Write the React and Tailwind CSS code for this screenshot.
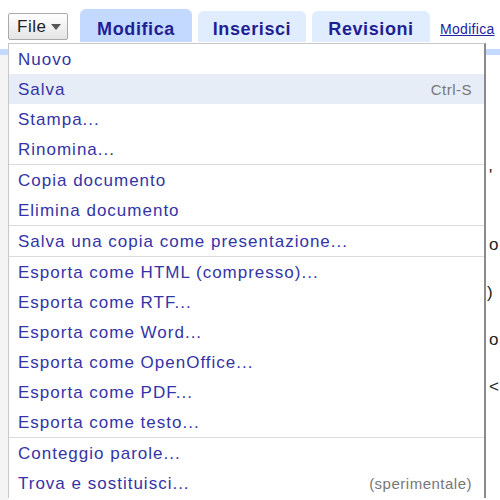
import React from "react";

const groups = [
  [
    { t: "Nuovo" },
    { t: "Salva", k: "Ctrl-S", hi: true },
    { t: "Stampa..." },
    { t: "Rinomina..." },
  ],
  [{ t: "Copia documento" }, { t: "Elimina documento" }],
  [{ t: "Salva una copia come presentazione..." }],
  [
    { t: "Esporta come HTML (compresso)..." },
    { t: "Esporta come RTF..." },
    { t: "Esporta come Word..." },
    { t: "Esporta come OpenOffice..." },
    { t: "Esporta come PDF..." },
    { t: "Esporta come testo..." },
  ],
  [{ t: "Conteggio parole..." }, { t: "Trova e sostituisci...", k: "(sperimentale)" }],
];

export default function App() {
  return (
    <div
      className="relative w-[500px] h-[500px] overflow-hidden bg-white"
      style={{ fontFamily: '"Liberation Sans", Arial, sans-serif' }}
    >
      {/* top bar */}
      <div className="flex items-end h-[42px] pl-[8px]">
        <div className="mb-[2px] flex items-center gap-[5px] h-[27px] w-[60px] pl-[8px] rounded-[2px] border border-[#a9a9a9] bg-gradient-to-b from-white to-[#e4e4e4] text-[17px] tracking-[0.5px] text-[#222]">
          <span>File</span>
          <svg width="10" height="6" viewBox="0 0 10 6">
            <path d="M0 0 L10 0 L5 6 Z" fill="#555" />
          </svg>
        </div>
        <div className="ml-[12px] flex items-end justify-center pb-[4px] leading-none w-[112px] h-[33px] rounded-t-[6px] bg-[#c3d9ff] text-[18px] tracking-[0.6px] font-bold text-[#1f1f95]">
          Modifica
        </div>
        <div className="ml-[6px] flex items-end justify-center pb-[4px] leading-none w-[108px] h-[31px] rounded-t-[6px] bg-[#e0ecff] text-[18px] tracking-[0.6px] font-bold text-[#1f1f95]">
          Inserisci
        </div>
        <div className="ml-[6px] flex items-end justify-center pb-[4px] leading-none w-[118px] h-[31px] rounded-t-[6px] bg-[#e0ecff] text-[18px] tracking-[0.6px] font-bold text-[#1f1f95]">
          Revisioni
        </div>
        <div className="ml-[10px] mb-[2px] text-[14px] tracking-[0.3px] text-[#2323a3] underline whitespace-nowrap">
          Modifica
        </div>
      </div>
      {/* toolbar strip */}
      <div className="h-[6px] mt-[7px] bg-[#c3d9ff]" />
      <div className="h-[445px] bg-[#f4f4f4] pl-[8px]">
        <div className="h-full bg-white pl-[481px] text-[17px] text-[#222] leading-none">
          <div className="pt-[112px]">'</div>
          <div className="pt-[52px]">o</div>
          <div className="pt-[31px] -ml-[2px]">)</div>
          <div className="pt-[30px]">o</div>
          <div className="pt-[30px]">&lt;</div>
        </div>
      </div>

      {/* dropdown menu */}
      <div className="absolute left-[8px] top-[43px] w-[478px] bg-white border-l border-t border-[#c8c8c8] border-r-2 border-r-[#8a8a8a] text-[17px] tracking-[1px] text-[#3434a6]">
        {groups.map((g, gi) => (
          <div key={gi} className={gi > 0 ? "border-t border-[#dcdcdc]" : ""}>
            {g.map((it) => (
              <div
                key={it.t}
                className={
                  "flex items-center justify-between h-[30px] pt-[2px] pl-[9px] pr-[12px] " +
                  (it.hi ? "bg-[#e6edf7]" : "")
                }
              >
                <span>{it.t}</span>
                {it.k && <span className="text-[15px] tracking-[0.5px] text-[#777]">{it.k}</span>}
              </div>
            ))}
          </div>
        ))}
      </div>
    </div>
  );
}
